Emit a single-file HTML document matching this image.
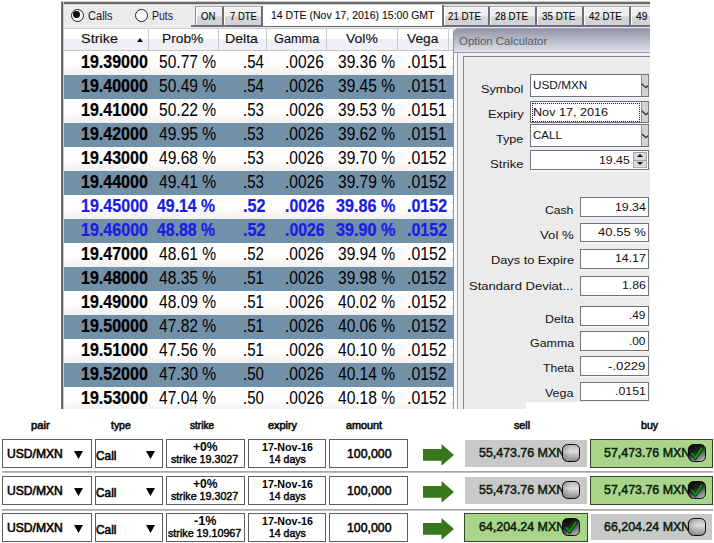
<!DOCTYPE html><html><head><meta charset="utf-8"><title>Option chain</title><style>
*{box-sizing:border-box;margin:0;padding:0}
html,body{width:714px;height:543px;background:#fff;overflow:hidden}
body{font-family:"Liberation Sans",sans-serif;position:relative;color:#000}
.a{position:absolute;white-space:nowrap}
/* ---------- top screenshot ---------- */
#top{left:0;top:0;width:650px;height:409px;overflow:hidden}
#bg{left:61px;top:1px;width:589px;height:408px;background:#ebebeb}
.tb{color:#1a1a22}
.radio{width:13px;height:13px;border-radius:50%;border:1.6px solid #1e1e1e;background:#fff}

.radio.on:after{content:"";position:absolute;left:1.5px;top:1.5px;width:6.8px;height:6.8px;border-radius:50%;background:#0c0c0c}
.tab{top:6px;height:19px;background:linear-gradient(#f1f1f1 0,#eeeeee 48%,#d5d5d5 56%,#d2d2d2 100%);border-top:1px solid #a4a4aa;border-right:2px solid #6e6e7a;box-shadow:inset 1px 1px 0 #fdfdfd}
.tt{color:#0a0a0a;-webkit-text-stroke:.2px #0a0a0a}
.tabline{background:#6e6e7c;height:2.3px}
.atab{top:4px;height:23px;background:#fff;border-right:2px solid #70707a;border-top:1px solid #a6a6a6;border-bottom:1.6px solid #6c6c78}
/* header */
#hd{left:63px;top:28px;width:390px;height:23px;background:linear-gradient(#fff 0,#fff 48%,#eceef5 50%,#f0f2f7 100%);border-bottom:1px solid #c6c6c6;border-top:1px solid #cdcdcd}
.hs{top:29px;width:1px;height:21px;background:#cbcbcb}
.ht{color:#111}
.row{left:63px;width:390px;height:24px}
.row.w{background:linear-gradient(#fff 0,#fff 55%,#f0f0f0 100%)}
.row.s{background:#7390a9}
.bl{color:#1c1ce0}
/* calculator */
#calc{left:453px;top:27.5px;width:197px;height:382px;background:#f0f0f0;border-left:1px solid #8f90a8;border-top:1px solid #a3a5b6;border-top-left-radius:5px;overflow:hidden}
#ttl{left:454px;top:28.5px;width:196px;height:23px;border-top-left-radius:4px;background:linear-gradient(#9094a6 0,#a9adbc 30%,#c4c7d4 65%,#dfe2ea 100%)}
.lb{color:#111}
.fd{background:#fff;border:1px solid #6e737b;box-shadow:0 1.5px 0 #f4f4f4,1.5px 0 0 #f4f4f4}
.dd{width:8px;background:#d2d2d2;border-left:1px solid #8a8e96;border-right:1px solid #7a8088}
/* ---------- bottom table ---------- */
.h2{color:#111;-webkit-text-stroke:.35px #111}
.bx{background:#fff;border:1.2px solid #5e5e5e;height:29px}
.sk{-webkit-text-stroke:.3px #000}
.sep{left:2px;width:711px;height:2px;background:linear-gradient(#a8a8a8 0,#a8a8a8 55%,#dcdcdc 100%)}
.gray{background:#c9c9c9}
.green{background:#a9d58b;border:1px solid #33482a}
.money{color:#0c220c;-webkit-text-stroke:.35px #0c220c}
.cb{width:18px;height:18px;border:1.7px solid #0a0a0a;border-radius:5.5px;background:linear-gradient(100deg,rgba(0,0,0,.22) 0,rgba(0,0,0,0) 45%),linear-gradient(#b8b8b8 0,#dedede 40%,#8a8a8a 100%)}
.cb.on{background:linear-gradient(150deg,#060606 0,#1c1c1c 38%,#6a6a6a 66%,#cdcdcd 100%)}
</style></head><body>
<div id="top" class="a"><div id="bg" class="a"></div>
<div class="a radio on" style="left:70.8px;top:8.8px"></div>
<div class="a" style="left:88.40px;top:7.60px;font-size:13px;line-height:16px;transform-origin:0 50%;transform:scale(0.8512,1.000);color:#17162e;">Calls</div>
<div class="a radio" style="left:134.8px;top:8.9px"></div>
<div class="a" style="left:152.20px;top:7.60px;font-size:13px;line-height:16px;transform-origin:0 50%;transform:scale(0.8073,1.000);color:#17162e;">Puts</div>
<div class="a tabline" style="left:191px;top:24.5px;width:72px"></div>
<div class="a tab" style="left:195px;width:28.5px;border-left:1px solid #8c8c94"></div>
<div class="a" style="left:201.00px;top:9.00px;font-size:11.6px;line-height:14px;transform-origin:0 50%;transform:scale(0.8218,1.000);color:#0a0a0a;-webkit-text-stroke:.15px #0a0a0a;">ON</div>
<div class="a tab" style="left:223.5px;width:39.5px"></div>
<div class="a" style="left:229.60px;top:9.00px;font-size:11.6px;line-height:14px;transform-origin:0 50%;transform:scale(0.8183,1.000);color:#0a0a0a;-webkit-text-stroke:.15px #0a0a0a;">7 DTE</div>
<div class="a atab" style="left:263px;width:181.4px"></div>
<div class="a" style="left:270.80px;top:7.70px;font-size:11.6px;line-height:14px;transform-origin:0 50%;transform:scale(0.9062,1.000);color:#0a0a0a;-webkit-text-stroke:.1px #0a0a0a;">14 DTE (Nov 17, 2016) 15:00 GMT</div>
<div class="a tabline" style="left:443px;top:24.5px;width:210px"></div>
<div class="a tab" style="left:444px;width:46px"></div>
<div class="a" style="left:448.20px;top:9.00px;font-size:11.6px;line-height:14px;transform-origin:0 50%;transform:scale(0.8392,1.000);color:#0a0a0a;-webkit-text-stroke:.15px #0a0a0a;">21 DTE</div>
<div class="a tab" style="left:490px;width:47px"></div>
<div class="a" style="left:495.30px;top:9.00px;font-size:11.6px;line-height:14px;transform-origin:0 50%;transform:scale(0.8366,1.000);color:#0a0a0a;-webkit-text-stroke:.15px #0a0a0a;">28 DTE</div>
<div class="a tab" style="left:537px;width:47px"></div>
<div class="a" style="left:542.20px;top:9.00px;font-size:11.6px;line-height:14px;transform-origin:0 50%;transform:scale(0.8468,1.000);color:#0a0a0a;-webkit-text-stroke:.15px #0a0a0a;">35 DTE</div>
<div class="a tab" style="left:584px;width:47px"></div>
<div class="a" style="left:589.40px;top:9.00px;font-size:11.6px;line-height:14px;transform-origin:0 50%;transform:scale(0.8341,1.000);color:#0a0a0a;-webkit-text-stroke:.15px #0a0a0a;">42 DTE</div>
<div class="a tab" style="left:631px;width:47px"></div>
<div class="a" style="left:635.90px;top:9.00px;font-size:11.6px;line-height:14px;transform-origin:0 50%;transform:scale(0.8838,1.000);color:#0a0a0a;-webkit-text-stroke:.15px #0a0a0a;">49</div>
<div id="hd" class="a"></div>
<div class="a hs" style="left:148px"></div>
<div class="a hs" style="left:218px"></div>
<div class="a hs" style="left:266px"></div>
<div class="a hs" style="left:326px"></div>
<div class="a hs" style="left:397px"></div>
<div class="a hs" style="left:448px"></div>
<div class="a" style="left:81.20px;top:32.10px;font-size:12.7px;line-height:15px;transform-origin:0 50%;transform:scale(1.1398,1.000);color:#111;-webkit-text-stroke:.12px #111;">Strike</div>
<div class="a" style="left:162.00px;top:32.10px;font-size:12.7px;line-height:15px;transform-origin:0 50%;transform:scale(1.0863,1.000);color:#111;-webkit-text-stroke:.12px #111;">Prob%</div>
<div class="a" style="left:225.20px;top:32.10px;font-size:12.7px;line-height:15px;transform-origin:0 50%;transform:scale(1.1128,1.000);color:#111;-webkit-text-stroke:.12px #111;">Delta</div>
<div class="a" style="left:273.70px;top:32.10px;font-size:12.7px;line-height:15px;transform-origin:0 50%;transform:scale(1.0028,1.000);color:#111;-webkit-text-stroke:.12px #111;">Gamma</div>
<div class="a" style="left:345.50px;top:32.10px;font-size:12.7px;line-height:15px;transform-origin:0 50%;transform:scale(1.1022,1.000);color:#111;-webkit-text-stroke:.12px #111;">Vol%</div>
<div class="a" style="left:406.50px;top:32.10px;font-size:12.7px;line-height:15px;transform-origin:0 50%;transform:scale(1.0839,1.000);color:#111;-webkit-text-stroke:.12px #111;">Vega</div>
<div class="a" style="left:136.8px;top:38.2px;width:0;height:0;border-left:3.8px solid transparent;border-right:3.8px solid transparent;border-bottom:4px solid #111"></div>
<div class="a row w" style="top:51px"></div>
<div class="a" style="left:80.70px;top:53.20px;font-size:15.4px;line-height:18px;font-weight:bold;transform-origin:0 50%;transform:scale(1.0415,1.180);-webkit-text-stroke:.2px #000;">19.39000</div>
<div class="a" style="left:158.90px;top:53.20px;font-size:15.4px;line-height:18px;transform-origin:0 50%;transform:scale(1.0123,1.180);">50.77 %</div>
<div class="a" style="left:243.40px;top:53.20px;font-size:15.4px;line-height:18px;transform-origin:0 50%;transform:scale(0.9764,1.180);">.54</div>
<div class="a" style="left:285.20px;top:53.20px;font-size:15.4px;line-height:18px;transform-origin:0 50%;transform:scale(1.0070,1.180);">.0026</div>
<div class="a" style="left:338.40px;top:53.20px;font-size:15.4px;line-height:18px;transform-origin:0 50%;transform:scale(1.0106,1.180);">39.36 %</div>
<div class="a" style="left:407.40px;top:53.20px;font-size:15.4px;line-height:18px;transform-origin:0 50%;transform:scale(1.0252,1.180);">.0151</div>
<div class="a" style="left:451.6px;top:57.6px;width:1.4px;height:1.6px;background:#e2a85c"></div><div class="a" style="left:451.6px;top:66.6px;width:1.4px;height:1.6px;background:#e2a85c"></div>
<div class="a row s" style="top:75px"></div>
<div class="a" style="left:80.70px;top:77.20px;font-size:15.4px;line-height:18px;font-weight:bold;transform-origin:0 50%;transform:scale(1.0415,1.180);-webkit-text-stroke:.2px #000;">19.40000</div>
<div class="a" style="left:158.90px;top:77.20px;font-size:15.4px;line-height:18px;transform-origin:0 50%;transform:scale(1.0123,1.180);">50.49 %</div>
<div class="a" style="left:243.40px;top:77.20px;font-size:15.4px;line-height:18px;transform-origin:0 50%;transform:scale(0.9764,1.180);">.54</div>
<div class="a" style="left:285.20px;top:77.20px;font-size:15.4px;line-height:18px;transform-origin:0 50%;transform:scale(1.0070,1.180);">.0026</div>
<div class="a" style="left:338.40px;top:77.20px;font-size:15.4px;line-height:18px;transform-origin:0 50%;transform:scale(1.0106,1.180);">39.45 %</div>
<div class="a" style="left:407.40px;top:77.20px;font-size:15.4px;line-height:18px;transform-origin:0 50%;transform:scale(1.0252,1.180);">.0151</div>
<div class="a" style="left:451.6px;top:81.6px;width:1.4px;height:1.6px;background:#6b6a5c"></div><div class="a" style="left:451.6px;top:90.6px;width:1.4px;height:1.6px;background:#6b6a5c"></div>
<div class="a row w" style="top:99px"></div>
<div class="a" style="left:80.70px;top:101.20px;font-size:15.4px;line-height:18px;font-weight:bold;transform-origin:0 50%;transform:scale(1.0415,1.180);-webkit-text-stroke:.2px #000;">19.41000</div>
<div class="a" style="left:158.90px;top:101.20px;font-size:15.4px;line-height:18px;transform-origin:0 50%;transform:scale(1.0123,1.180);">50.22 %</div>
<div class="a" style="left:243.40px;top:101.20px;font-size:15.4px;line-height:18px;transform-origin:0 50%;transform:scale(0.9764,1.180);">.53</div>
<div class="a" style="left:285.20px;top:101.20px;font-size:15.4px;line-height:18px;transform-origin:0 50%;transform:scale(1.0070,1.180);">.0026</div>
<div class="a" style="left:338.40px;top:101.20px;font-size:15.4px;line-height:18px;transform-origin:0 50%;transform:scale(1.0106,1.180);">39.53 %</div>
<div class="a" style="left:407.40px;top:101.20px;font-size:15.4px;line-height:18px;transform-origin:0 50%;transform:scale(1.0252,1.180);">.0151</div>
<div class="a" style="left:451.6px;top:105.6px;width:1.4px;height:1.6px;background:#e2a85c"></div><div class="a" style="left:451.6px;top:114.6px;width:1.4px;height:1.6px;background:#e2a85c"></div>
<div class="a row s" style="top:123px"></div>
<div class="a" style="left:80.70px;top:125.20px;font-size:15.4px;line-height:18px;font-weight:bold;transform-origin:0 50%;transform:scale(1.0415,1.180);-webkit-text-stroke:.2px #000;">19.42000</div>
<div class="a" style="left:158.90px;top:125.20px;font-size:15.4px;line-height:18px;transform-origin:0 50%;transform:scale(1.0123,1.180);">49.95 %</div>
<div class="a" style="left:243.40px;top:125.20px;font-size:15.4px;line-height:18px;transform-origin:0 50%;transform:scale(0.9764,1.180);">.53</div>
<div class="a" style="left:285.20px;top:125.20px;font-size:15.4px;line-height:18px;transform-origin:0 50%;transform:scale(1.0070,1.180);">.0026</div>
<div class="a" style="left:338.40px;top:125.20px;font-size:15.4px;line-height:18px;transform-origin:0 50%;transform:scale(1.0106,1.180);">39.62 %</div>
<div class="a" style="left:407.40px;top:125.20px;font-size:15.4px;line-height:18px;transform-origin:0 50%;transform:scale(1.0252,1.180);">.0151</div>
<div class="a" style="left:451.6px;top:129.6px;width:1.4px;height:1.6px;background:#6b6a5c"></div><div class="a" style="left:451.6px;top:138.6px;width:1.4px;height:1.6px;background:#6b6a5c"></div>
<div class="a row w" style="top:147px"></div>
<div class="a" style="left:80.70px;top:149.20px;font-size:15.4px;line-height:18px;font-weight:bold;transform-origin:0 50%;transform:scale(1.0415,1.180);-webkit-text-stroke:.2px #000;">19.43000</div>
<div class="a" style="left:158.90px;top:149.20px;font-size:15.4px;line-height:18px;transform-origin:0 50%;transform:scale(1.0123,1.180);">49.68 %</div>
<div class="a" style="left:243.40px;top:149.20px;font-size:15.4px;line-height:18px;transform-origin:0 50%;transform:scale(0.9764,1.180);">.53</div>
<div class="a" style="left:285.20px;top:149.20px;font-size:15.4px;line-height:18px;transform-origin:0 50%;transform:scale(1.0070,1.180);">.0026</div>
<div class="a" style="left:338.40px;top:149.20px;font-size:15.4px;line-height:18px;transform-origin:0 50%;transform:scale(1.0106,1.180);">39.70 %</div>
<div class="a" style="left:407.40px;top:149.20px;font-size:15.4px;line-height:18px;transform-origin:0 50%;transform:scale(1.0252,1.180);">.0152</div>
<div class="a" style="left:451.6px;top:153.6px;width:1.4px;height:1.6px;background:#e2a85c"></div><div class="a" style="left:451.6px;top:162.6px;width:1.4px;height:1.6px;background:#e2a85c"></div>
<div class="a row s" style="top:171px"></div>
<div class="a" style="left:80.70px;top:173.20px;font-size:15.4px;line-height:18px;font-weight:bold;transform-origin:0 50%;transform:scale(1.0415,1.180);-webkit-text-stroke:.2px #000;">19.44000</div>
<div class="a" style="left:158.90px;top:173.20px;font-size:15.4px;line-height:18px;transform-origin:0 50%;transform:scale(1.0123,1.180);">49.41 %</div>
<div class="a" style="left:243.40px;top:173.20px;font-size:15.4px;line-height:18px;transform-origin:0 50%;transform:scale(0.9764,1.180);">.53</div>
<div class="a" style="left:285.20px;top:173.20px;font-size:15.4px;line-height:18px;transform-origin:0 50%;transform:scale(1.0070,1.180);">.0026</div>
<div class="a" style="left:338.40px;top:173.20px;font-size:15.4px;line-height:18px;transform-origin:0 50%;transform:scale(1.0106,1.180);">39.79 %</div>
<div class="a" style="left:407.40px;top:173.20px;font-size:15.4px;line-height:18px;transform-origin:0 50%;transform:scale(1.0252,1.180);">.0152</div>
<div class="a" style="left:451.6px;top:177.6px;width:1.4px;height:1.6px;background:#6b6a5c"></div><div class="a" style="left:451.6px;top:186.6px;width:1.4px;height:1.6px;background:#6b6a5c"></div>
<div class="a row w" style="top:195px"></div>
<div class="a" style="left:80.70px;top:197.20px;font-size:15.4px;line-height:18px;font-weight:bold;transform-origin:0 50%;transform:scale(1.0446,1.180);color:#1c1ce0;-webkit-text-stroke:.2px #1c1ce0;">19.45000</div>
<div class="a" style="left:157.40px;top:197.20px;font-size:15.4px;line-height:18px;font-weight:bold;transform-origin:0 50%;transform:scale(1.0300,1.180);color:#1c1ce0;-webkit-text-stroke:.2px #1c1ce0;">49.14 %</div>
<div class="a" style="left:242.80px;top:197.20px;font-size:15.4px;line-height:18px;font-weight:bold;transform-origin:0 50%;transform:scale(1.0511,1.180);color:#1c1ce0;-webkit-text-stroke:.2px #1c1ce0;">.52</div>
<div class="a" style="left:285.30px;top:197.20px;font-size:15.4px;line-height:18px;font-weight:bold;transform-origin:0 50%;transform:scale(1.0252,1.180);color:#1c1ce0;-webkit-text-stroke:.2px #1c1ce0;">.0026</div>
<div class="a" style="left:336.20px;top:197.20px;font-size:15.4px;line-height:18px;font-weight:bold;transform-origin:0 50%;transform:scale(1.0513,1.180);color:#1c1ce0;-webkit-text-stroke:.2px #1c1ce0;">39.86 %</div>
<div class="a" style="left:407.00px;top:197.20px;font-size:15.4px;line-height:18px;font-weight:bold;transform-origin:0 50%;transform:scale(1.0407,1.180);color:#1c1ce0;-webkit-text-stroke:.2px #1c1ce0;">.0152</div>
<div class="a" style="left:451.6px;top:201.6px;width:1.4px;height:1.6px;background:#e2a85c"></div><div class="a" style="left:451.6px;top:210.6px;width:1.4px;height:1.6px;background:#e2a85c"></div>
<div class="a row s" style="top:219px"></div>
<div class="a" style="left:80.70px;top:221.20px;font-size:15.4px;line-height:18px;font-weight:bold;transform-origin:0 50%;transform:scale(1.0446,1.180);color:#1c1ce0;-webkit-text-stroke:.2px #1c1ce0;">19.46000</div>
<div class="a" style="left:157.40px;top:221.20px;font-size:15.4px;line-height:18px;font-weight:bold;transform-origin:0 50%;transform:scale(1.0300,1.180);color:#1c1ce0;-webkit-text-stroke:.2px #1c1ce0;">48.88 %</div>
<div class="a" style="left:242.80px;top:221.20px;font-size:15.4px;line-height:18px;font-weight:bold;transform-origin:0 50%;transform:scale(1.0511,1.180);color:#1c1ce0;-webkit-text-stroke:.2px #1c1ce0;">.52</div>
<div class="a" style="left:285.30px;top:221.20px;font-size:15.4px;line-height:18px;font-weight:bold;transform-origin:0 50%;transform:scale(1.0252,1.180);color:#1c1ce0;-webkit-text-stroke:.2px #1c1ce0;">.0026</div>
<div class="a" style="left:336.20px;top:221.20px;font-size:15.4px;line-height:18px;font-weight:bold;transform-origin:0 50%;transform:scale(1.0513,1.180);color:#1c1ce0;-webkit-text-stroke:.2px #1c1ce0;">39.90 %</div>
<div class="a" style="left:407.00px;top:221.20px;font-size:15.4px;line-height:18px;font-weight:bold;transform-origin:0 50%;transform:scale(1.0407,1.180);color:#1c1ce0;-webkit-text-stroke:.2px #1c1ce0;">.0152</div>
<div class="a" style="left:451.6px;top:225.6px;width:1.4px;height:1.6px;background:#6b6a5c"></div><div class="a" style="left:451.6px;top:234.6px;width:1.4px;height:1.6px;background:#6b6a5c"></div>
<div class="a row w" style="top:243px"></div>
<div class="a" style="left:80.70px;top:245.20px;font-size:15.4px;line-height:18px;font-weight:bold;transform-origin:0 50%;transform:scale(1.0415,1.180);-webkit-text-stroke:.2px #000;">19.47000</div>
<div class="a" style="left:158.90px;top:245.20px;font-size:15.4px;line-height:18px;transform-origin:0 50%;transform:scale(1.0123,1.180);">48.61 %</div>
<div class="a" style="left:243.40px;top:245.20px;font-size:15.4px;line-height:18px;transform-origin:0 50%;transform:scale(0.9764,1.180);">.52</div>
<div class="a" style="left:285.20px;top:245.20px;font-size:15.4px;line-height:18px;transform-origin:0 50%;transform:scale(1.0070,1.180);">.0026</div>
<div class="a" style="left:338.40px;top:245.20px;font-size:15.4px;line-height:18px;transform-origin:0 50%;transform:scale(1.0106,1.180);">39.94 %</div>
<div class="a" style="left:407.40px;top:245.20px;font-size:15.4px;line-height:18px;transform-origin:0 50%;transform:scale(1.0252,1.180);">.0152</div>
<div class="a" style="left:451.6px;top:249.6px;width:1.4px;height:1.6px;background:#e2a85c"></div><div class="a" style="left:451.6px;top:258.6px;width:1.4px;height:1.6px;background:#e2a85c"></div>
<div class="a row s" style="top:267px"></div>
<div class="a" style="left:80.70px;top:269.20px;font-size:15.4px;line-height:18px;font-weight:bold;transform-origin:0 50%;transform:scale(1.0415,1.180);-webkit-text-stroke:.2px #000;">19.48000</div>
<div class="a" style="left:158.90px;top:269.20px;font-size:15.4px;line-height:18px;transform-origin:0 50%;transform:scale(1.0123,1.180);">48.35 %</div>
<div class="a" style="left:243.40px;top:269.20px;font-size:15.4px;line-height:18px;transform-origin:0 50%;transform:scale(0.9764,1.180);">.51</div>
<div class="a" style="left:285.20px;top:269.20px;font-size:15.4px;line-height:18px;transform-origin:0 50%;transform:scale(1.0070,1.180);">.0026</div>
<div class="a" style="left:338.40px;top:269.20px;font-size:15.4px;line-height:18px;transform-origin:0 50%;transform:scale(1.0106,1.180);">39.98 %</div>
<div class="a" style="left:407.40px;top:269.20px;font-size:15.4px;line-height:18px;transform-origin:0 50%;transform:scale(1.0252,1.180);">.0152</div>
<div class="a" style="left:451.6px;top:273.6px;width:1.4px;height:1.6px;background:#6b6a5c"></div><div class="a" style="left:451.6px;top:282.6px;width:1.4px;height:1.6px;background:#6b6a5c"></div>
<div class="a row w" style="top:291px"></div>
<div class="a" style="left:80.70px;top:293.20px;font-size:15.4px;line-height:18px;font-weight:bold;transform-origin:0 50%;transform:scale(1.0415,1.180);-webkit-text-stroke:.2px #000;">19.49000</div>
<div class="a" style="left:158.90px;top:293.20px;font-size:15.4px;line-height:18px;transform-origin:0 50%;transform:scale(1.0123,1.180);">48.09 %</div>
<div class="a" style="left:243.40px;top:293.20px;font-size:15.4px;line-height:18px;transform-origin:0 50%;transform:scale(0.9764,1.180);">.51</div>
<div class="a" style="left:285.20px;top:293.20px;font-size:15.4px;line-height:18px;transform-origin:0 50%;transform:scale(1.0070,1.180);">.0026</div>
<div class="a" style="left:338.40px;top:293.20px;font-size:15.4px;line-height:18px;transform-origin:0 50%;transform:scale(1.0106,1.180);">40.02 %</div>
<div class="a" style="left:407.40px;top:293.20px;font-size:15.4px;line-height:18px;transform-origin:0 50%;transform:scale(1.0252,1.180);">.0152</div>
<div class="a" style="left:451.6px;top:297.6px;width:1.4px;height:1.6px;background:#e2a85c"></div><div class="a" style="left:451.6px;top:306.6px;width:1.4px;height:1.6px;background:#e2a85c"></div>
<div class="a row s" style="top:315px"></div>
<div class="a" style="left:80.70px;top:317.20px;font-size:15.4px;line-height:18px;font-weight:bold;transform-origin:0 50%;transform:scale(1.0415,1.180);-webkit-text-stroke:.2px #000;">19.50000</div>
<div class="a" style="left:158.90px;top:317.20px;font-size:15.4px;line-height:18px;transform-origin:0 50%;transform:scale(1.0123,1.180);">47.82 %</div>
<div class="a" style="left:243.40px;top:317.20px;font-size:15.4px;line-height:18px;transform-origin:0 50%;transform:scale(0.9764,1.180);">.51</div>
<div class="a" style="left:285.20px;top:317.20px;font-size:15.4px;line-height:18px;transform-origin:0 50%;transform:scale(1.0070,1.180);">.0026</div>
<div class="a" style="left:338.40px;top:317.20px;font-size:15.4px;line-height:18px;transform-origin:0 50%;transform:scale(1.0106,1.180);">40.06 %</div>
<div class="a" style="left:407.40px;top:317.20px;font-size:15.4px;line-height:18px;transform-origin:0 50%;transform:scale(1.0252,1.180);">.0152</div>
<div class="a" style="left:451.6px;top:321.6px;width:1.4px;height:1.6px;background:#6b6a5c"></div><div class="a" style="left:451.6px;top:330.6px;width:1.4px;height:1.6px;background:#6b6a5c"></div>
<div class="a row w" style="top:339px"></div>
<div class="a" style="left:80.70px;top:341.20px;font-size:15.4px;line-height:18px;font-weight:bold;transform-origin:0 50%;transform:scale(1.0415,1.180);-webkit-text-stroke:.2px #000;">19.51000</div>
<div class="a" style="left:158.90px;top:341.20px;font-size:15.4px;line-height:18px;transform-origin:0 50%;transform:scale(1.0123,1.180);">47.56 %</div>
<div class="a" style="left:243.40px;top:341.20px;font-size:15.4px;line-height:18px;transform-origin:0 50%;transform:scale(0.9764,1.180);">.51</div>
<div class="a" style="left:285.20px;top:341.20px;font-size:15.4px;line-height:18px;transform-origin:0 50%;transform:scale(1.0070,1.180);">.0026</div>
<div class="a" style="left:338.40px;top:341.20px;font-size:15.4px;line-height:18px;transform-origin:0 50%;transform:scale(1.0106,1.180);">40.10 %</div>
<div class="a" style="left:407.40px;top:341.20px;font-size:15.4px;line-height:18px;transform-origin:0 50%;transform:scale(1.0252,1.180);">.0152</div>
<div class="a" style="left:451.6px;top:345.6px;width:1.4px;height:1.6px;background:#e2a85c"></div><div class="a" style="left:451.6px;top:354.6px;width:1.4px;height:1.6px;background:#e2a85c"></div>
<div class="a row s" style="top:363px"></div>
<div class="a" style="left:80.70px;top:365.20px;font-size:15.4px;line-height:18px;font-weight:bold;transform-origin:0 50%;transform:scale(1.0415,1.180);-webkit-text-stroke:.2px #000;">19.52000</div>
<div class="a" style="left:158.90px;top:365.20px;font-size:15.4px;line-height:18px;transform-origin:0 50%;transform:scale(1.0123,1.180);">47.30 %</div>
<div class="a" style="left:243.40px;top:365.20px;font-size:15.4px;line-height:18px;transform-origin:0 50%;transform:scale(0.9764,1.180);">.50</div>
<div class="a" style="left:285.20px;top:365.20px;font-size:15.4px;line-height:18px;transform-origin:0 50%;transform:scale(1.0070,1.180);">.0026</div>
<div class="a" style="left:338.40px;top:365.20px;font-size:15.4px;line-height:18px;transform-origin:0 50%;transform:scale(1.0106,1.180);">40.14 %</div>
<div class="a" style="left:407.40px;top:365.20px;font-size:15.4px;line-height:18px;transform-origin:0 50%;transform:scale(1.0252,1.180);">.0152</div>
<div class="a" style="left:451.6px;top:369.6px;width:1.4px;height:1.6px;background:#6b6a5c"></div><div class="a" style="left:451.6px;top:378.6px;width:1.4px;height:1.6px;background:#6b6a5c"></div>
<div class="a row w" style="top:387px"></div>
<div class="a" style="left:80.70px;top:389.20px;font-size:15.4px;line-height:18px;font-weight:bold;transform-origin:0 50%;transform:scale(1.0415,1.180);-webkit-text-stroke:.2px #000;">19.53000</div>
<div class="a" style="left:158.90px;top:389.20px;font-size:15.4px;line-height:18px;transform-origin:0 50%;transform:scale(1.0123,1.180);">47.04 %</div>
<div class="a" style="left:243.40px;top:389.20px;font-size:15.4px;line-height:18px;transform-origin:0 50%;transform:scale(0.9764,1.180);">.50</div>
<div class="a" style="left:285.20px;top:389.20px;font-size:15.4px;line-height:18px;transform-origin:0 50%;transform:scale(1.0070,1.180);">.0026</div>
<div class="a" style="left:338.40px;top:389.20px;font-size:15.4px;line-height:18px;transform-origin:0 50%;transform:scale(1.0106,1.180);">40.18 %</div>
<div class="a" style="left:407.40px;top:389.20px;font-size:15.4px;line-height:18px;transform-origin:0 50%;transform:scale(1.0252,1.180);">.0152</div>
<div class="a" style="left:451.6px;top:393.6px;width:1.4px;height:1.6px;background:#e2a85c"></div><div class="a" style="left:451.6px;top:402.6px;width:1.4px;height:1.6px;background:#e2a85c"></div>
<div id="calc" class="a"></div><div id="ttl" class="a"></div>
<div class="a" style="left:459.30px;top:34.20px;font-size:11.6px;line-height:14px;transform-origin:0 50%;transform:scale(0.9853,1.000);color:#5a5a64;">Option Calculator</div>
<div class="a" style="left:454px;top:51.5px;width:196px;height:1.6px;background:#9c9db4"></div>
<div class="a" style="left:454px;top:53px;width:3px;height:356px;background:#fbfbfd"></div>
<div class="a" style="left:457px;top:52px;width:1px;height:357px;background:#9c9db4"></div>
<div class="a" style="left:463px;top:56px;width:190px;height:360px;background:#ebebeb;border-left:1.6px solid #858585;border-top:1.6px solid #858585"></div>
<div class="a" style="left:481.10px;top:81.61px;font-size:11.8px;line-height:14px;transform-origin:0 50%;transform:scale(1.0774,1.000);color:#111;">Symbol</div>
<div class="a" style="left:487.80px;top:106.91px;font-size:11.8px;line-height:14px;transform-origin:0 50%;transform:scale(1.0891,1.000);color:#111;">Expiry</div>
<div class="a" style="left:496.20px;top:131.81px;font-size:11.8px;line-height:14px;transform-origin:0 50%;transform:scale(1.0671,1.000);color:#111;">Type</div>
<div class="a" style="left:490.00px;top:156.81px;font-size:11.8px;line-height:14px;transform-origin:0 50%;transform:scale(1.1107,1.000);color:#111;">Strike</div>
<div class="a fd" style="left:530px;top:74px;width:119px;height:23px"></div>
<div class="a dd" style="left:641.2px;top:75px;height:21px"></div>
<svg class="a" style="left:641px;top:82.9px" width="7.4" height="8" viewBox="0 0 7.4 8"><path d="M0.9 1 L5 4.7 L9.2 1" fill="none" stroke="#2c2c2c" stroke-width="1.35"/></svg>
<div class="a" style="left:533.30px;top:77.80px;font-size:11.8px;line-height:14px;transform-origin:0 50%;transform:scale(0.9980,1.000);color:#111;">USD/MXN</div>
<div class="a fd" style="left:530px;top:100.6px;width:119px;height:22.3px"></div>
<div class="a dd" style="left:641.2px;top:101.6px;height:20.3px"></div>
<svg class="a" style="left:641px;top:109.5px" width="7.4" height="8" viewBox="0 0 7.4 8"><path d="M0.9 1 L5 4.7 L9.2 1" fill="none" stroke="#2c2c2c" stroke-width="1.35"/></svg>
<div class="a" style="left:531.6px;top:102.7px;width:108.6px;height:19.3px;border:1px dotted #222"></div>
<div class="a" style="left:533.30px;top:104.60px;font-size:11.8px;line-height:14px;transform-origin:0 50%;transform:scale(1.0698,1.000);color:#111;">Nov 17, 2016</div>
<div class="a fd" style="left:530px;top:124.1px;width:119px;height:22.5px"></div>
<div class="a dd" style="left:641.2px;top:125.1px;height:20.5px"></div>
<svg class="a" style="left:641px;top:133px" width="7.4" height="8" viewBox="0 0 7.4 8"><path d="M0.9 1 L5 4.7 L9.2 1" fill="none" stroke="#2c2c2c" stroke-width="1.35"/></svg>
<div class="a" style="left:533.30px;top:128.40px;font-size:11.8px;line-height:14px;transform-origin:0 50%;transform:scale(0.9827,1.000);color:#111;">CALL</div>
<div class="a fd" style="left:530px;top:149.8px;width:119px;height:19.9px"></div>
<div class="a" style="left:598.80px;top:153.70px;font-size:11px;line-height:13px;transform-origin:0 50%;transform:scale(1.1191,1.000);color:#111;">19.45</div>
<div class="a" style="left:633px;top:151.6px;width:14px;height:16.4px;background:#dadada;border:1px solid #a8a8a8"><div style="position:absolute;left:3px;top:1.6px;width:0;height:0;border-left:3px solid transparent;border-right:3px solid transparent;border-bottom:3.6px solid #111"></div><div style="position:absolute;left:0;top:7px;width:12px;height:1.2px;background:#a0a0a0"></div><div style="position:absolute;left:3px;top:9.6px;width:0;height:0;border-left:3px solid transparent;border-right:3px solid transparent;border-top:3.6px solid #111"></div></div>
<div class="a" style="left:545.40px;top:202.71px;font-size:11.8px;line-height:14px;transform-origin:0 50%;transform:scale(1.0276,1.000);color:#111;">Cash</div>
<div class="a fd" style="left:580px;top:197.4px;width:69px;height:19.6px"></div>
<div class="a" style="left:614.60px;top:200.80px;font-size:11px;line-height:13px;transform-origin:0 50%;transform:scale(1.1191,1.000);color:#111;">19.34</div>
<div class="a" style="left:540.00px;top:227.51px;font-size:11.8px;line-height:14px;transform-origin:0 50%;transform:scale(1.1169,1.000);color:#111;">Vol %</div>
<div class="a fd" style="left:580px;top:222.9px;width:69px;height:19.6px"></div>
<div class="a" style="left:597.50px;top:226.30px;font-size:11px;line-height:13px;transform-origin:0 50%;transform:scale(1.1868,1.000);color:#111;">40.55 %</div>
<div class="a" style="left:490.60px;top:253.01px;font-size:11.8px;line-height:14px;transform-origin:0 50%;transform:scale(1.0831,1.000);color:#111;">Days to Expire</div>
<div class="a fd" style="left:580px;top:249px;width:69px;height:19.6px"></div>
<div class="a" style="left:614.60px;top:252.40px;font-size:11px;line-height:13px;transform-origin:0 50%;transform:scale(1.1191,1.000);color:#111;">14.17</div>
<div class="a" style="left:469.40px;top:278.51px;font-size:11.8px;line-height:14px;transform-origin:0 50%;transform:scale(1.1043,1.000);color:#111;">Standard Deviat...</div>
<div class="a fd" style="left:580px;top:276px;width:69px;height:19.6px"></div>
<div class="a" style="left:621.50px;top:279.40px;font-size:11px;line-height:13px;transform-origin:0 50%;transform:scale(1.1165,1.000);color:#111;">1.86</div>
<div class="a" style="left:544.70px;top:311.61px;font-size:11.8px;line-height:14px;transform-origin:0 50%;transform:scale(1.0525,1.000);color:#111;">Delta</div>
<div class="a fd" style="left:580px;top:306px;width:69px;height:19.6px"></div>
<div class="a" style="left:629.00px;top:309.40px;font-size:11px;line-height:13px;transform-origin:0 50%;transform:scale(1.0726,1.000);color:#111;">.49</div>
<div class="a" style="left:529.50px;top:336.41px;font-size:11.8px;line-height:14px;transform-origin:0 50%;transform:scale(1.0531,1.000);color:#111;">Gamma</div>
<div class="a fd" style="left:580px;top:331.2px;width:69px;height:19.6px"></div>
<div class="a" style="left:629.00px;top:334.60px;font-size:11px;line-height:13px;transform-origin:0 50%;transform:scale(1.0726,1.000);color:#111;">.00</div>
<div class="a" style="left:542.60px;top:361.31px;font-size:11.8px;line-height:14px;transform-origin:0 50%;transform:scale(1.0303,1.000);color:#111;">Theta</div>
<div class="a fd" style="left:580px;top:356.3px;width:69px;height:19.6px"></div>
<div class="a" style="left:608.00px;top:359.70px;font-size:11px;line-height:13px;transform-origin:0 50%;transform:scale(1.1993,1.000);color:#111;">-.0229</div>
<div class="a" style="left:545.30px;top:386.41px;font-size:11.8px;line-height:14px;transform-origin:0 50%;transform:scale(1.0551,1.000);color:#111;">Vega</div>
<div class="a fd" style="left:580px;top:381.5px;width:69px;height:19.6px"></div>
<div class="a" style="left:614.50px;top:384.90px;font-size:11px;line-height:13px;transform-origin:0 50%;transform:scale(1.1227,1.000);color:#111;">.0151</div>
<div class="a" style="left:526.4px;top:402.4px;width:130px;height:10px;background:#fff"></div>
<div class="a" style="left:61px;top:1px;width:589px;height:1px;background:#c8c8c8"></div>
<div class="a" style="left:61px;top:2px;width:589px;height:3px;background:linear-gradient(#6e6e6e 0,#6e6e6e 33%,#666 33%,#666 66%,#d6d6d6 66%)"></div>
<div class="a" style="left:61px;top:2px;width:3px;height:407px;background:linear-gradient(90deg,#7c7c7c 0,#7c7c7c 33%,#5a5a5a 33%,#5a5a5a 66%,#cfcfcf 66%)"></div>
</div>
<div class="a" style="left:30.80px;top:419.10px;font-size:11px;line-height:13px;transform-origin:0 50%;transform:scale(1.0301,1.000);color:#111;-webkit-text-stroke:.65px #111;">pair</div>
<div class="a" style="left:110.90px;top:419.10px;font-size:11px;line-height:13px;transform-origin:0 50%;transform:scale(0.9476,1.000);color:#111;-webkit-text-stroke:.65px #111;">type</div>
<div class="a" style="left:189.70px;top:419.10px;font-size:11px;line-height:13px;transform-origin:0 50%;transform:scale(0.9133,1.000);color:#111;-webkit-text-stroke:.65px #111;">strike</div>
<div class="a" style="left:268.40px;top:419.10px;font-size:11px;line-height:13px;transform-origin:0 50%;transform:scale(0.9881,1.000);color:#111;-webkit-text-stroke:.65px #111;">expiry</div>
<div class="a" style="left:345.70px;top:419.10px;font-size:11px;line-height:13px;transform-origin:0 50%;transform:scale(0.9841,1.000);color:#111;-webkit-text-stroke:.65px #111;">amount</div>
<div class="a" style="left:513.60px;top:419.10px;font-size:11px;line-height:13px;transform-origin:0 50%;transform:scale(0.9691,1.000);color:#111;-webkit-text-stroke:.65px #111;">sell</div>
<div class="a" style="left:640.80px;top:419.10px;font-size:11px;line-height:13px;transform-origin:0 50%;transform:scale(0.9644,1.000);color:#111;-webkit-text-stroke:.65px #111;">buy</div>
<div class="a bx" style="left:2px;top:439px;width:89.5px"></div>
<div class="a" style="left:7.40px;top:446.70px;font-size:12px;line-height:14px;transform-origin:0 50%;transform:scale(1.0085,1.000);-webkit-text-stroke:.55px #000;">USD/MXN</div>
<svg class="a" style="left:74.4px;top:450.7px" width="9" height="8" viewBox="0 0 9 8"><path d="M0 0 H9 L4.5 8 Z" fill="#000"/></svg>
<div class="a bx" style="left:95px;top:439px;width:67.8px"></div>
<div class="a" style="left:95.80px;top:448.70px;font-size:12px;line-height:14px;transform-origin:0 50%;transform:scale(0.9867,1.000);-webkit-text-stroke:.55px #000;">Call</div>
<svg class="a" style="left:145.6px;top:450.7px" width="9" height="8" viewBox="0 0 9 8"><path d="M0 0 H9 L4.5 8 Z" fill="#000"/></svg>
<div class="a bx" style="left:166px;top:439px;width:78.6px"></div>
<div class="a" style="left:192.80px;top:440.40px;font-size:12.4px;line-height:15px;font-weight:bold;transform-origin:0 50%;transform:scale(0.9817,1.000);">+0%</div>
<div class="a" style="left:171.30px;top:452.60px;font-size:10.8px;line-height:13px;transform-origin:0 50%;transform:scale(0.9920,1.000);-webkit-text-stroke:.42px #000;">strike 19.3027</div>
<div class="a bx" style="left:248px;top:439px;width:78px"></div>
<div class="a" style="left:261.60px;top:441.20px;font-size:11.2px;line-height:13px;font-weight:bold;transform-origin:0 50%;transform:scale(0.9508,1.000);">17-Nov-16</div>
<div class="a" style="left:268.90px;top:452.60px;font-size:10.8px;line-height:13px;transform-origin:0 50%;transform:scale(0.9730,1.000);-webkit-text-stroke:.42px #000;">14 days</div>
<div class="a bx" style="left:329.4px;top:439px;width:78.6px"></div>
<div class="a" style="left:346.50px;top:447.10px;font-size:12.3px;line-height:15px;transform-origin:0 50%;transform:scale(1.0008,1.000);-webkit-text-stroke:.5px #000;">100,000</div>
<svg class="a" style="left:422.8px;top:443.7px" width="31" height="21.8" viewBox="0 0 31 21.8"><path d="M0 5 H18.5 V0 L31 10.9 L18.5 21.8 V16.8 H0 Z" fill="#38771b"/></svg>
<div class="a gray" style="left:465px;top:439.9px;width:121.5px;height:27px"></div>
<div class="a green" style="left:590px;top:439.1px;width:122.6px;height:28.6px"></div>
<div class="a" style="left:478.60px;top:445.80px;font-size:12.4px;line-height:15px;transform-origin:0 50%;transform:scale(1.0004,1.000);color:#0c220c;-webkit-text-stroke:.5px #0c220c;">55,473.76 MXN</div>
<div class="a" style="left:604.20px;top:445.80px;font-size:12.4px;line-height:15px;transform-origin:0 50%;transform:scale(1.0027,1.000);color:#0c220c;-webkit-text-stroke:.5px #0c220c;">57,473.76 MXN</div>
<div class="a cb " style="left:562px;top:444px"></div>
<div class="a cb on" style="left:687.6px;top:444px"><svg class="a" style="left:0;top:0" width="15" height="15" viewBox="0 0 15 15"><path d="M2.6 8 L6.5 12.6 L13 2.8" fill="none" stroke="#042c07" stroke-width="3.5" stroke-linejoin="miter"/><path d="M2.6 8 L6.5 12.6 L13 2.8" fill="none" stroke="#109414" stroke-width="1.9"/></svg></div>
<div class="a sep" style="top:471.4px"></div>
<div class="a bx" style="left:2px;top:476.2px;width:89.5px"></div>
<div class="a" style="left:7.40px;top:483.70px;font-size:12px;line-height:14px;transform-origin:0 50%;transform:scale(1.0085,1.000);-webkit-text-stroke:.55px #000;">USD/MXN</div>
<svg class="a" style="left:74.4px;top:487.7px" width="9" height="8" viewBox="0 0 9 8"><path d="M0 0 H9 L4.5 8 Z" fill="#000"/></svg>
<div class="a bx" style="left:95px;top:476.2px;width:67.8px"></div>
<div class="a" style="left:95.80px;top:485.70px;font-size:12px;line-height:14px;transform-origin:0 50%;transform:scale(0.9867,1.000);-webkit-text-stroke:.55px #000;">Call</div>
<svg class="a" style="left:145.6px;top:487.7px" width="9" height="8" viewBox="0 0 9 8"><path d="M0 0 H9 L4.5 8 Z" fill="#000"/></svg>
<div class="a bx" style="left:166px;top:476.2px;width:78.6px"></div>
<div class="a" style="left:192.80px;top:477.40px;font-size:12.4px;line-height:15px;font-weight:bold;transform-origin:0 50%;transform:scale(0.9817,1.000);">+0%</div>
<div class="a" style="left:171.30px;top:489.60px;font-size:10.8px;line-height:13px;transform-origin:0 50%;transform:scale(0.9920,1.000);-webkit-text-stroke:.42px #000;">strike 19.3027</div>
<div class="a bx" style="left:248px;top:476.2px;width:78px"></div>
<div class="a" style="left:261.60px;top:478.20px;font-size:11.2px;line-height:13px;font-weight:bold;transform-origin:0 50%;transform:scale(0.9508,1.000);">17-Nov-16</div>
<div class="a" style="left:268.90px;top:489.60px;font-size:10.8px;line-height:13px;transform-origin:0 50%;transform:scale(0.9730,1.000);-webkit-text-stroke:.42px #000;">14 days</div>
<div class="a bx" style="left:329.4px;top:476.2px;width:78.6px"></div>
<div class="a" style="left:346.50px;top:484.10px;font-size:12.3px;line-height:15px;transform-origin:0 50%;transform:scale(1.0008,1.000);-webkit-text-stroke:.5px #000;">100,000</div>
<svg class="a" style="left:422.8px;top:480.7px" width="31" height="21.8" viewBox="0 0 31 21.8"><path d="M0 5 H18.5 V0 L31 10.9 L18.5 21.8 V16.8 H0 Z" fill="#38771b"/></svg>
<div class="a gray" style="left:465px;top:476.9px;width:121.5px;height:27px"></div>
<div class="a green" style="left:590px;top:476.1px;width:122.6px;height:28.6px"></div>
<div class="a" style="left:478.60px;top:482.80px;font-size:12.4px;line-height:15px;transform-origin:0 50%;transform:scale(1.0004,1.000);color:#0c220c;-webkit-text-stroke:.5px #0c220c;">55,473.76 MXN</div>
<div class="a" style="left:604.20px;top:482.80px;font-size:12.4px;line-height:15px;transform-origin:0 50%;transform:scale(1.0027,1.000);color:#0c220c;-webkit-text-stroke:.5px #0c220c;">57,473.76 MXN</div>
<div class="a cb " style="left:562px;top:481px"></div>
<div class="a cb on" style="left:687.6px;top:481px"><svg class="a" style="left:0;top:0" width="15" height="15" viewBox="0 0 15 15"><path d="M2.6 8 L6.5 12.6 L13 2.8" fill="none" stroke="#042c07" stroke-width="3.5" stroke-linejoin="miter"/><path d="M2.6 8 L6.5 12.6 L13 2.8" fill="none" stroke="#109414" stroke-width="1.9"/></svg></div>
<div class="a sep" style="top:508.7px"></div>
<div class="a bx" style="left:2px;top:513.3px;width:89.5px"></div>
<div class="a" style="left:7.40px;top:520.70px;font-size:12px;line-height:14px;transform-origin:0 50%;transform:scale(1.0085,1.000);-webkit-text-stroke:.55px #000;">USD/MXN</div>
<svg class="a" style="left:74.4px;top:524.7px" width="9" height="8" viewBox="0 0 9 8"><path d="M0 0 H9 L4.5 8 Z" fill="#000"/></svg>
<div class="a bx" style="left:95px;top:513.3px;width:67.8px"></div>
<div class="a" style="left:95.80px;top:522.70px;font-size:12px;line-height:14px;transform-origin:0 50%;transform:scale(0.9867,1.000);-webkit-text-stroke:.55px #000;">Call</div>
<svg class="a" style="left:145.6px;top:524.7px" width="9" height="8" viewBox="0 0 9 8"><path d="M0 0 H9 L4.5 8 Z" fill="#000"/></svg>
<div class="a bx" style="left:166px;top:513.3px;width:78.6px"></div>
<div class="a" style="left:193.90px;top:514.40px;font-size:12.4px;line-height:15px;font-weight:bold;transform-origin:0 50%;transform:scale(1.0160,1.000);">-1%</div>
<div class="a" style="left:168.30px;top:526.60px;font-size:10.8px;line-height:13px;transform-origin:0 50%;transform:scale(0.9925,1.000);-webkit-text-stroke:.42px #000;">strike 19.10967</div>
<div class="a bx" style="left:248px;top:513.3px;width:78px"></div>
<div class="a" style="left:261.60px;top:515.20px;font-size:11.2px;line-height:13px;font-weight:bold;transform-origin:0 50%;transform:scale(0.9508,1.000);">17-Nov-16</div>
<div class="a" style="left:268.90px;top:526.60px;font-size:10.8px;line-height:13px;transform-origin:0 50%;transform:scale(0.9730,1.000);-webkit-text-stroke:.42px #000;">14 days</div>
<div class="a bx" style="left:329.4px;top:513.3px;width:78.6px"></div>
<div class="a" style="left:346.50px;top:521.10px;font-size:12.3px;line-height:15px;transform-origin:0 50%;transform:scale(1.0008,1.000);-webkit-text-stroke:.5px #000;">100,000</div>
<svg class="a" style="left:422.8px;top:517.7px" width="31" height="21.8" viewBox="0 0 31 21.8"><path d="M0 5 H18.5 V0 L31 10.9 L18.5 21.8 V16.8 H0 Z" fill="#38771b"/></svg>
<div class="a green" style="left:464px;top:513.3px;width:124px;height:28.4px"></div>
<div class="a gray" style="left:591.4px;top:514.4px;width:121px;height:26px"></div>
<div class="a" style="left:478.60px;top:519.80px;font-size:12.4px;line-height:15px;transform-origin:0 50%;transform:scale(1.0004,1.000);color:#0c220c;-webkit-text-stroke:.5px #0c220c;">64,204.24 MXN</div>
<div class="a" style="left:604.20px;top:519.80px;font-size:12.4px;line-height:15px;transform-origin:0 50%;transform:scale(1.0027,1.000);color:#0c220c;-webkit-text-stroke:.5px #0c220c;">66,204.24 MXN</div>
<div class="a cb on" style="left:562px;top:518px"><svg class="a" style="left:0;top:0" width="15" height="15" viewBox="0 0 15 15"><path d="M2.6 8 L6.5 12.6 L13 2.8" fill="none" stroke="#042c07" stroke-width="3.5" stroke-linejoin="miter"/><path d="M2.6 8 L6.5 12.6 L13 2.8" fill="none" stroke="#109414" stroke-width="1.9"/></svg></div>
<div class="a cb " style="left:687.6px;top:518px"></div>
</body></html>
